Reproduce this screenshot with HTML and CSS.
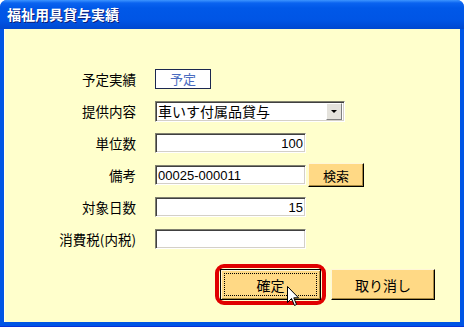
FILE: index.html
```html
<!DOCTYPE html>
<html lang="ja">
<head>
    <meta charset="UTF-8">
    <title>福祉用具貸与実績</title>
    <link rel="stylesheet" href="styles.css">
</head>
<body>

    <div class="window">
        <!-- Title bar -->
        <div class="titlebar">福祉用具貸与実績</div>

        <div class="content">
            <!-- Fields -->
            <div class="form">
                <div class="label">予定実績</div>
                <div class="field"><div class="status">予定</div></div>

                <div class="label">提供内容</div>
                <div class="field">
                    <div class="combo">
                        <span class="combo-text">車いす付属品貸与</span>
                        <span class="combo-btn"><span class="arrow"></span></span>
                    </div>
                </div>

                <div class="label">単位数</div>
                <div class="field"><input class="box num" type="text" value="100"></div>

                <div class="label">備考</div>
                <div class="field">
                    <input class="box" type="text" value="00025-000011">
                    <button class="btn search">検索</button>
                </div>

                <div class="label">対象日数</div>
                <div class="field"><input class="box num" type="text" value="15"></div>

                <div class="label">消費税(内税)</div>
                <div class="field"><input class="box" type="text" value=""></div>
            </div>

            <!-- Buttons -->
            <div class="actions">
                <div class="confirm-wrap">
                    <button class="btn big default">確定</button>
                    <svg class="cursor" width="13" height="21" viewBox="0 0 13 21">
                        <path d="M0.5 0.5 L0.5 16.5 L4.5 12.5 L7.5 19.5 L9.5 18.5 L6.8 11.8 L11.5 11.8 Z" fill="#fff" stroke="#000" stroke-width="1"/>
                    </svg>
                </div>
                <button class="btn big cancel">取り消し</button>
            </div>
        </div>
    </div>

</body>
</html>
```

FILE: styles.css
```css
body {
    margin: 0;
    font-family: "Noto Sans CJK JP", "Noto Sans", sans-serif;
    background: #ffffff;
}

.window {
    width: 464px;
    height: 327px;
    background: #0055e5;
    border-radius: 7px 7px 0 0;
    display: flex;
    flex-direction: column;
    overflow: hidden;
    border-bottom: 1px solid #0831d9;
    box-sizing: border-box;
}

.titlebar {
    height: 29px;
    flex: none;
    box-sizing: border-box;
    padding-left: 7px;
    line-height: 29px;
    color: #ffffff;
    font-weight: bold;
    font-size: 14px;
    text-shadow: 1px 1px 0 #0a1e7a;
    background: linear-gradient(to bottom, #3d95ff 0px, #0a63f0 3px, #0058e8 8px, #0055e5 20px, #0048d0 29px);
}

.content {
    flex: 1;
    margin: 0 4px 4px 4px;
    background: #ffffcc;
    border-left: 1px solid #fffff0;
    box-sizing: border-box;
}

.form {
    display: grid;
    grid-template-columns: 131px auto;
    grid-auto-rows: 32px;
    column-gap: 19px;
    align-items: center;
    padding-top: 34px;
}

.label {
    text-align: right;
    font-size: 13.5px;
    color: #000000;
}

.field {
    display: flex;
    align-items: center;
}

.status {
    width: 56px;
    height: 20px;
    box-sizing: border-box;
    border: 1px solid #1c2850;
    background: #ffffff;
    color: #4a6cc0;
    font-size: 13px;
    text-align: center;
    line-height: 18px;
}

.combo {
    width: 190px;
    height: 21px;
    box-sizing: border-box;
    display: flex;
    align-items: center;
    background: #ffffff;
    border-top: 1px solid #808070;
    border-left: 1px solid #808070;
    border-bottom: 1px solid #ffffff;
    border-right: 1px solid #ffffff;
    box-shadow: inset 1px 1px 0 #404040, inset -1px -1px 0 #d4d0c8;
}

.combo-text {
    flex: 1;
    padding-left: 2px;
    font-size: 14px;
    line-height: 19px;
}

.combo-btn {
    width: 16px;
    height: 17px;
    margin-right: 2px;
    box-sizing: border-box;
    background: #e4e2dc;
    border: 1px solid;
    border-color: #ffffff #808080 #808080 #ffffff;
    display: flex;
    align-items: center;
    justify-content: center;
}

.arrow {
    width: 0;
    height: 0;
    border-left: 3px solid transparent;
    border-right: 3px solid transparent;
    border-top: 3px solid #000000;
}

.box {
    width: 151px;
    height: 20px;
    box-sizing: border-box;
    margin: 0;
    padding: 0 2px;
    font-family: "Liberation Sans", "Noto Sans", sans-serif;
    font-size: 13px;
    color: #000000;
    background: #ffffff;
    border-top: 1px solid #808070;
    border-left: 1px solid #808070;
    border-bottom: 1px solid #ffffff;
    border-right: 1px solid #ffffff;
    box-shadow: inset 1px 1px 0 #404040, inset -1px -1px 0 #d4d0c8;
    outline: none;
}

.num {
    text-align: right;
}

.btn {
    font-family: "Noto Sans CJK JP", "Noto Sans", sans-serif;
    font-size: 14px;
    color: #000000;
    background: #ffd985;
    border: 1px solid;
    border-color: #fff6d8 #000000 #000000 #fff6d8;
    box-shadow: inset -1px -1px 0 #a88a40;
    padding: 0;
    margin: 0;
    cursor: pointer;
}

.search {
    width: 56px;
    height: 24px;
    margin-left: 2px;
    font-size: 13px;
}

.actions {
    display: flex;
    gap: 10px;
    margin-top: 14px;
    padding-left: 215px;
}

.big {
    height: 31px;
}

.confirm-wrap {
    position: relative;
    border-radius: 4px;
    outline: 4px solid #e00000;
    outline-offset: 1px;
}

.default {
    width: 101px;
    display: block;
    position: relative;
    border-color: #000000;
    box-shadow: inset 1px 1px 0 #fff6d8, inset -1px -1px 0 #a88a40;
}

.default::after {
    content: "";
    position: absolute;
    left: 3px;
    top: 3px;
    right: 3px;
    bottom: 3px;
    border: 1px dotted #000000;
}

.cancel {
    width: 104px;
}

.cursor {
    position: absolute;
    left: 67px;
    top: 17px;
}
```
